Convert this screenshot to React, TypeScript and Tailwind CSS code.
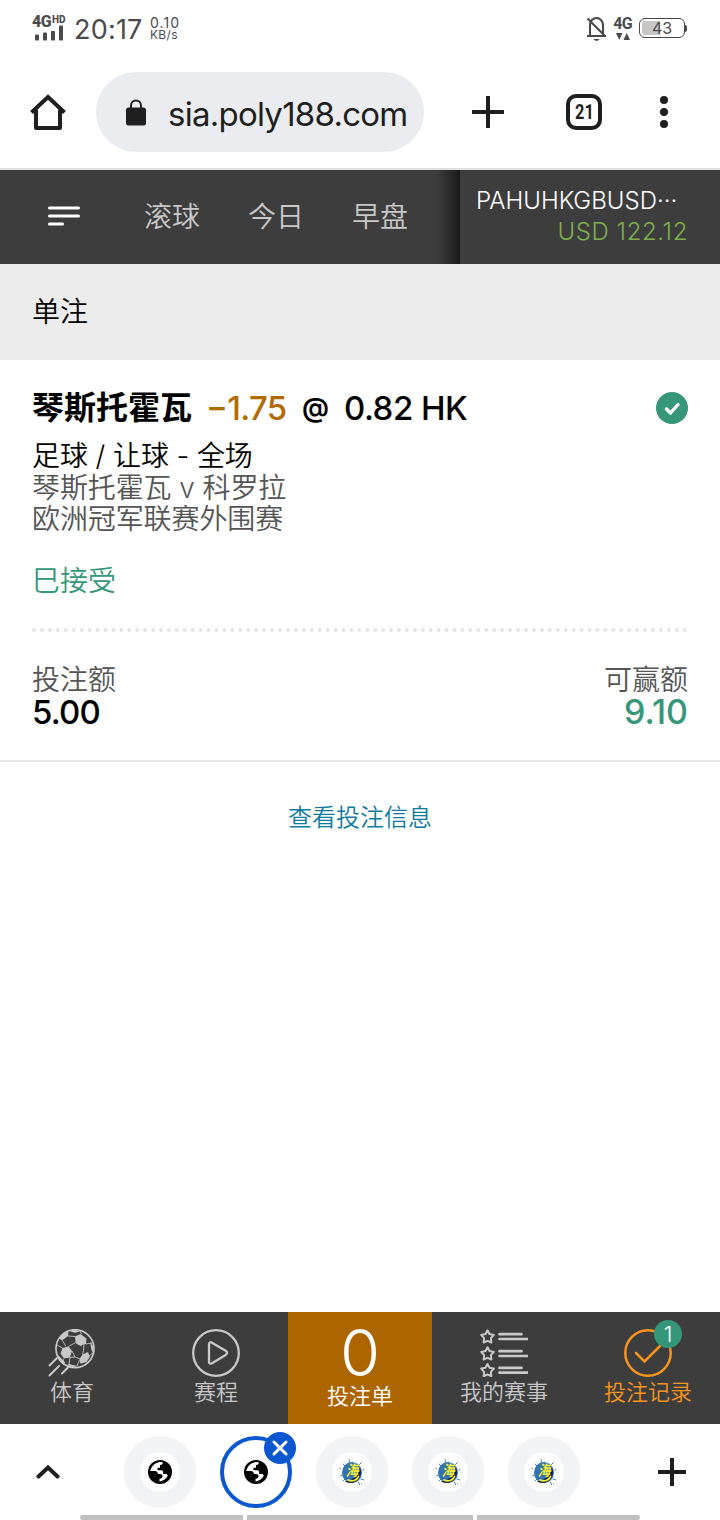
import type { ReactNode } from 'react'
import clsx from 'clsx'

const StatusBar = () => (
  <div className="flex h-14 items-center pl-8 pr-[34px] text-[#4a4a4a]">
    <div className="relative h-[26px] w-[35px]">
      <div className="flex items-start font-['Roboto',sans-serif] font-extrabold leading-none">
        <span className="w-5 text-[16px] leading-[14px] tracking-[-0.5px]">4G</span>
        <span className="text-[10px] leading-[9px]">HD</span>
      </div>
      <svg className="absolute bottom-0 left-[3px] h-4 w-7 fill-[#4a4a4a]" viewBox="0 0 28 16">
        <rect x="0" y="9.5" width="4" height="6" rx="1" />
        <rect x="8" y="7.5" width="4" height="8" rx="1" />
        <rect x="16" y="6" width="4" height="9.5" rx="1" />
        <rect x="24" y="0.5" width="4" height="15" rx="1" />
      </svg>
    </div>
    <span className="ml-[7px] mt-[3px] w-[69px] whitespace-nowrap text-[27px] leading-8 tracking-[0.2px]">
      20:17
    </span>
    <div className="ml-[7px] flex flex-col whitespace-nowrap">
      <span className="text-[14px] leading-[13px] tracking-[1.1px]">0.10</span>
      <span className="text-[12px] leading-[12px] tracking-[0.3px]">KB/s</span>
    </div>
    <div className="ml-auto flex items-center">
      <svg className="h-[26px] w-[22px]" viewBox="0 0 22 26" fill="none">
        <path
          d="M1 21h19M4 20.500V10c0-4 3-7 6.500-7s6.500 3 6.500 7v10.500M1.500 3.500l18 18"
          stroke="#4a4a4a"
          strokeWidth="2.100"
        />
        <path d="M7.500 24h6c-1 2.400-5 2.400-6 0z" fill="#4a4a4a" />
      </svg>
      <div className="ml-[5px] flex w-[19px] flex-col items-center">
        <span className="font-['Roboto',sans-serif] text-[16px] font-bold leading-[14px] tracking-[-0.8px]">
          4G
        </span>
        <svg className="mt-[2px] h-[7px] w-[14px] fill-[#4a4a4a]" viewBox="0 0 14 7">
          <path d="M0 0h6.500l-3.250 7zM7.500 7h6.500l-3.250-7z" />
        </svg>
      </div>
      <div className="ml-[7px] flex h-5 w-[46px] items-center rounded-md border border-[#4a4a4a] p-[2px]">
        <div className="h-[14px] w-[18px] rounded-l-[3px] bg-[#c6c6c4]" />
        <span className="-ml-[8px] text-[16px] leading-[14px]">43</span>
      </div>
      <div className="-mr-px h-[7px] w-[2px] rounded-r bg-[#4a4a4a]" />
    </div>
  </div>
)

const PlusIcon = ({ className }: { className?: string }) => (
  <svg className={clsx('h-8 w-8', className)} viewBox="0 0 32 32" stroke="#1f1f1f" strokeWidth="4">
    <path d="M16 0v32M0 16h32" />
  </svg>
)

const AddressBar = () => (
  <div className="flex h-28 items-center pl-[30px]">
    <svg className="h-9 w-9" viewBox="0 0 36 36" fill="none" stroke="#1f1f1f" strokeWidth="4">
      <path d="M6 16v18h24V16" strokeLinejoin="round" />
      <path d="M1.500 18.500L18 3l16.500 15.500" strokeLinejoin="miter" />
    </svg>
    <div className="ml-[30px] flex h-20 w-[328px] items-center rounded-full bg-[#ebecf0] pl-[30px]">
      <svg className="h-[27px] w-5" viewBox="0 0 20 27">
        <rect y="8.500" width="20" height="18" rx="2.500" fill="#1f1f1f" />
        <path d="M5 9V6.500a5 5 0 0 1 10 0V9" fill="none" stroke="#1f1f1f" strokeWidth="2" />
      </svg>
      <span className="ml-[22px] mt-1 whitespace-nowrap text-[33px] leading-10 tracking-[-0.75px] text-[#1f1f1f]">
        sia.poly188.com
      </span>
    </div>
    <PlusIcon className="ml-12" />
    <div className="ml-[62px] flex h-9 w-9 items-center justify-center rounded-[10px] border-4 border-[#1f1f1f] text-[#1f1f1f]">
      <span className="scale-x-[.82] font-['Roboto',sans-serif] text-[20px] font-bold leading-6">
        21
      </span>
    </div>
    <div className="ml-[58px] flex flex-col gap-1">
      <i className="h-2 w-2 rounded-full bg-[#1f1f1f]" />
      <i className="h-2 w-2 rounded-full bg-[#1f1f1f]" />
      <i className="h-2 w-2 rounded-full bg-[#1f1f1f]" />
    </div>
  </div>
)

const SiteHeader = () => (
  <header className="flex h-[94px] bg-[#3d3d3d]">
    <nav className="flex w-[460px] items-center bg-linear-to-r from-[#3d3d3d] from-95% to-[#1a1a1a] pl-12 text-[28px] font-[350] leading-10 text-[#c8c8c8]">
      <svg
        className="-mt-[2px] h-5 w-8"
        viewBox="0 0 32 20"
        stroke="#fff"
        strokeWidth="3"
        strokeLinecap="round"
      >
        <path d="M1.500 2h29M1.500 10h29M1.500 18h13" />
      </svg>
      <span className="ml-16">滚球</span>
      <span className="ml-12">今日</span>
      <span className="ml-12">早盘</span>
    </nav>
    <div className="flex flex-1 flex-col pl-4 pr-8 pt-[15px] font-light">
      <span className="flex h-[31px] whitespace-nowrap text-[24px] leading-[31px] text-white">
        PAHUHKGBUSD
        <span className="-translate-y-[7px] tracking-[0.5px]">…</span>
      </span>
      <span className="text-right text-[24px] leading-[31px] tracking-[0.6px] text-[#7fae4f]">
        USD 122.12
      </span>
    </div>
  </header>
)

const BetCard = () => (
  <section className="h-[402px] border-b-2 border-[#e5e5e5] px-8 pt-7">
    <div className="flex h-10 items-center text-[33px] font-medium leading-10 text-black">
      <span className="w-40 text-[32px] font-bold">琴斯托霍瓦</span>
      <span className="ml-[14px] flex w-[82px] whitespace-nowrap tracking-[-0.7px] text-[#b26b00]">
        <span className="-translate-y-[2px]">−</span>1.75
      </span>
      <span className="ml-[14px] w-7 text-[27px] font-semibold">@</span>
      <span className="ml-[14px] whitespace-nowrap tracking-[-0.5px]">0.82 HK</span>
      <svg className="ml-auto h-8 w-8" viewBox="0 0 32 32" fill="none">
        <circle cx="16" cy="16" r="16" fill="#35967a" />
        <path
          d="M10.500 17l4 4 7.500-8.500"
          stroke="#fff"
          strokeWidth="3.400"
          strokeLinecap="round"
          strokeLinejoin="round"
        />
      </svg>
    </div>
    <div className="mt-[12px] text-[28px] font-[350] leading-8 tracking-[-0.1px] text-black">
      足球 / 让球 - 全场
    </div>
    <div className="mt-px text-[28px] font-[350] leading-[31px] tracking-[-0.1px] text-[#555]">
      <div>琴斯托霍瓦 v 科罗拉</div>
      <div>欧洲冠军联赛外围赛</div>
    </div>
    <div className="mt-[30px] text-[28px] font-[350] leading-8 text-[#35967a]">巳接受</div>
    <svg className="mt-[31px] h-1 w-full" viewBox="0 0 656 4">
      <path
        d="M2 2h653"
        stroke="#e5e5e5"
        strokeWidth="4"
        strokeLinecap="round"
        strokeDasharray="0 7.935"
      />
    </svg>
    <div className="mt-8 flex justify-between text-[28px] font-[350] leading-8 text-[#555]">
      <div>
        <div>投注额</div>
        <div className="text-[33px] font-medium tracking-[-0.8px] text-black">5.00</div>
      </div>
      <div className="text-right">
        <div>可赢额</div>
        <div className="text-[34px] font-medium text-[#35967a]">9.10</div>
      </div>
    </div>
  </section>
)

const SoccerIcon = () => (
  <svg className="h-12 w-12" viewBox="0 0 48 48" fill="none" stroke="#c8c8c8">
    <circle cx="27" cy="19.700" r="19" strokeWidth="1.700" />
    <g fill="#c8c8c8" stroke="none">
      <path d="M27 7.500l5.500-2.500 6 4.500-.5 5.500-6 1.500-4.500-3z" />
      <path d="M14.500 19l6-1.500 3.500 4.500-2 6.500-6 1-3.500-5z" />
      <path d="M31.500 30l3-4.500 5.500-2.500 1.800 5-3.300 5-6 1.800z" />
      <path d="M11.200 9.500c2-4 5-6 9.300-7.500l-.5 5-6 4.500z" />
      <path d="M42 13l3 4v7l-1.500-3zM21 2l6 1.800 5-1.200-5-2.100zM9 25l3 6 3 3.500 2.500-.5-4.500-5zM21 35l8 2-4 1.800-6-2.800z" />
    </g>
    <path
      d="M20 7l7 .5M27.500 13.500l-7 4M36 15.500l-.5 6-1 4M24 22l3 6 5 2M18 17.500l-3.500-6M28 14l6 3M14.500 19l-5.500-3M38 15l6-1M41 27l4-3M22 28.500l5-.5M15 29.500l1 6M31.500 31l-2.500 6M22 28.500l-1 7M33.500 5l-1.500-3"
      strokeWidth=".9"
    />
    <path
      d="M1.500 36.500l7.500-7.500M1.500 46.500l9.500-9.500M14 44.500l6.500-6.500"
      strokeWidth="2"
      strokeLinecap="round"
    />
  </svg>
)

const PlayIcon = () => (
  <svg className="h-12 w-12" viewBox="0 0 48 48" fill="none" stroke="#c8c8c8" strokeWidth="2.300">
    <circle cx="24" cy="24" r="22.800" />
    <path d="M17 15.500c0-2.200 1.200-2.800 3-1.800l13.600 8c1.900 1.100 1.900 3.200 0 4.300l-13.600 8.200c-1.800 1-3 .4-3-1.800z" />
  </svg>
)

const StarListIcon = () => (
  <svg className="h-12 w-12" viewBox="0 0 48 48" fill="none" stroke="#c8c8c8">
    {[7.5, 24.5, 41.2].map((y) => (
      <g key={y} transform={`translate(7.500 ${y})`}>
        <path
          d="M0-6.200l2 3.700 4.300.9-2.900 3.200.5 4.400L0 4.300l-3.900 1.700.5-4.400-2.900-3.200 4.300-.9z"
          strokeWidth="2"
          strokeLinejoin="round"
        />
        <path d="M12-2.300h22M12 2.500h28.300" strokeWidth="2.700" strokeLinecap="round" />
      </g>
    ))}
  </svg>
)

const HistoryIcon = () => (
  <div className="relative h-12 w-12">
    <svg className="h-12 w-12" viewBox="0 0 48 48" fill="none" stroke="#f7941d" strokeWidth="2.500">
      <circle cx="24" cy="24" r="22.700" />
      <path d="M12 24l8.500 8.500L36 17" strokeLinecap="round" />
    </svg>
    <span className="absolute -right-[10px] -top-[9px] flex h-7 w-7 items-center justify-center rounded-full bg-[#35967a] text-[22px] leading-none text-white">
      1
    </span>
  </div>
)

const NavItem = ({
  icon,
  label,
  active,
}: {
  icon: ReactNode
  label: string
  active?: boolean
}) => (
  <div
    className={clsx(
      'flex w-36 flex-col items-center pt-[17px]',
      active ? 'text-[#f7941d]' : 'text-[#c8c8c8]'
    )}
  >
    {icon}
    <span className="mt-[2px] leading-[26px]">{label}</span>
  </div>
)

const BottomNav = () => (
  <footer className="flex h-28 bg-[#3d3d3d] text-[22px] font-[350]">
    <NavItem icon={<SoccerIcon />} label="体育" />
    <NavItem icon={<PlayIcon />} label="赛程" />
    <div className="flex w-36 flex-col items-center bg-[#ad6500] pt-[17px] text-white">
      <span className="h-12 text-[65px] leading-12">0</span>
      <span className="mt-[6px] leading-[26px]">投注单</span>
    </div>
    <NavItem icon={<StarListIcon />} label="我的赛事" />
    <NavItem icon={<HistoryIcon />} label="投注记录" active />
  </footer>
)

const GlobeIcon = () => (
  <svg className="h-6 w-6" viewBox="0 0 24 24">
    <circle cx="12" cy="12" r="12" fill="#000" />
    <path
      d="M3 8.500C4.500 5 7.500 2.600 11 2.200c1.500-.2 3 0 4 .4-.3 1.700-1.200 2.400-3 2.600v2.600H9.500v2.400h3.700c1.400 0 2 .8 2 2.200v1.600h2.400c1.200 0 1.900.6 2.200 1.700-1.800 3.300-4.800 5.300-8.300 5.700v-2.600c2-.2 3-1 3-2.600 0-1.500-1-2.300-2.700-2.300H10c-.2-1.900-1.300-3-3.200-3H2.200c.1-.8.400-1.700.8-2.400z"
      fill="#fff"
    />
  </svg>
)

const SeaIcon = () => (
  <svg className="h-7 w-7" viewBox="0 0 28 28">
    <g stroke="#4a82b8" strokeWidth="1" strokeLinecap="round">
      <path d="M5 6l3 3M23.500 4.500l-3 3M2.500 18l3-1.500M5 23l2.500-2.500M23 21l3 1M20.500 24l1 2.500M11 1.500l.8 3M25 12h1M2 10.500h.5M23.500 25.500l.3.300" />
    </g>
    <ellipse cx="14" cy="14.500" rx="10" ry="10.500" fill="#3673b3" />
    <path d="M21 8c5 7 0 17-8 17-3 0-5-1-6-2 7 1 13-6 14-15z" fill="#17283c" />
    <g
      fontFamily="'Noto Sans CJK SC', sans-serif"
      fontSize="14"
      fontWeight="700"
      textAnchor="middle"
      transform="translate(14 18) skewX(-14) scale(.9 1.080)"
    >
      <text fill="#f1ed3c">海</text>
    </g>
    <path
      d="M10 22c4 2 9 .5 10.500-3.500"
      stroke="#f1ed3c"
      strokeWidth="1.800"
      fill="none"
      strokeLinecap="round"
    />
  </svg>
)

const TabBubble = ({ children, selected }: { children: ReactNode; selected?: boolean }) => (
  <div
    className={clsx(
      'relative flex h-18 w-18 items-center justify-center rounded-full',
      selected ? 'border-4 border-[#0b57d0]' : 'bg-[#f1f3f4]'
    )}
  >
    <div className="flex h-10 w-10 items-center justify-center rounded-full bg-white">
      {children}
    </div>
    {selected && (
      <span className="absolute -right-2 -top-2 flex h-8 w-8 items-center justify-center rounded-full bg-[#0b57d0]">
        <svg className="h-4 w-4" viewBox="0 0 16 16" stroke="#fff" strokeWidth="3" strokeLinecap="round">
          <path d="M2 2l12 12M14 2L2 14" />
        </svg>
      </span>
    )}
  </div>
)

const TabStrip = () => (
  <div className="h-24">
    <div className="flex h-[91px] pt-3">
      <svg
        className="ml-9 mt-7 h-4 w-6"
        viewBox="0 0 24 16"
        fill="none"
        stroke="#1f1f1f"
        strokeWidth="4"
        strokeLinecap="round"
      >
        <path d="M2.500 12.500L12 3.500l9.500 9" />
      </svg>
      <div className="ml-16 flex gap-6">
        <TabBubble>
          <GlobeIcon />
        </TabBubble>
        <TabBubble selected>
          <GlobeIcon />
        </TabBubble>
        <TabBubble>
          <SeaIcon />
        </TabBubble>
        <TabBubble>
          <SeaIcon />
        </TabBubble>
        <TabBubble>
          <SeaIcon />
        </TabBubble>
      </div>
      <svg className="ml-[78px] mt-[22px] h-7 w-7" viewBox="0 0 28 28" stroke="#1f1f1f" strokeWidth="4">
        <path d="M14 0v28M0 14h28" />
      </svg>
    </div>
    <div className="flex h-[5px] gap-1 px-20">
      <div className="flex-1 rounded-l-full bg-[#c0c0c0]" />
      <div className="w-[226px] bg-[#c0c0c0]" />
      <div className="flex-1 rounded-r-full bg-[#c0c0c0]" />
    </div>
  </div>
)

const App = () => {
  return (
    <div className="flex h-[1520px] w-[720px] flex-col overflow-hidden bg-white font-['Inter','Noto_Sans_CJK_SC',sans-serif]">
      <StatusBar />
      <AddressBar />
      <div className="h-[2px] bg-[#e0e0e0]" />
      <SiteHeader />
      <div className="flex h-24 items-center bg-[#ececec] px-8 text-[28px] font-[350] text-black">
        单注
      </div>
      <BetCard />
      <main className="flex flex-1 justify-center pt-10">
        <a className="h-8 text-[24px] font-[350] leading-8 text-[#0e7a9f]">查看投注信息</a>
      </main>
      <BottomNav />
      <TabStrip />
    </div>
  )
}

export default App
